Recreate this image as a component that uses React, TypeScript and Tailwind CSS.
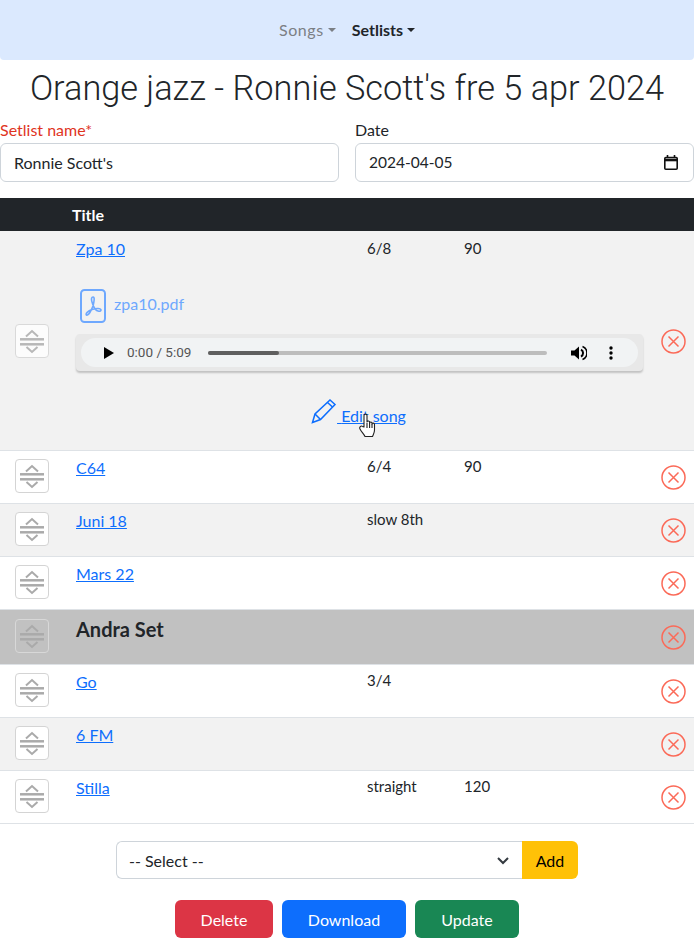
import React from 'react';

const BODY_FONT = 'font-["Lato",sans-serif]';

interface Song {
  title: string;
  sig?: string;
  tempo?: string;
  bold?: boolean;
}

const rows: Song[] = [
  { title: 'C64', sig: '6/4', tempo: '90' },
  { title: 'Juni 18', sig: 'slow 8th' },
  { title: 'Mars 22' },
  { title: 'Andra Set', bold: true },
  { title: 'Go', sig: '3/4' },
  { title: '6 FM' },
  { title: 'Stilla', sig: 'straight', tempo: '120' },
];

function DragHandle({ faded }: { faded?: boolean }) {
  return (
    <div
      className={`h-[34px] w-[34px] rounded border ${
        faded ? 'border-[#d8d8d8] bg-transparent' : 'border-[#d4d4d4] bg-white'
      }`}
    >
      <svg width="32" height="32" viewBox="1 1 32 32" fill="none" stroke="#aaaaaa" strokeWidth="2">
        <path d="M11 12.5 L17 7 L23 12.5" />
        <path d="M5 15.3 H29" strokeWidth="2.5" />
        <path d="M5 20.3 H29" strokeWidth="2.5" />
        <path d="M11.5 23 L17 28 L22.5 23" />
      </svg>
    </div>
  );
}

function RemoveIcon() {
  return (
    <svg width="25" height="25" viewBox="0 0 25 25" fill="none" stroke="#fb6a58" strokeWidth="1.5">
      <circle cx="12.5" cy="12.5" r="11.5" />
      <path d="M7.5 7.5 L17.5 17.5 M17.5 7.5 L7.5 17.5" />
    </svg>
  );
}

function AudioBar() {
  return (
    <div className="w-[567px] rounded-[4px] bg-[#e8e8e8] px-[5px] py-[4px] shadow-[0_2px_2px_rgba(0,0,0,0.2)]">
      <div className="flex h-[29px] items-center rounded-full bg-[#f1f3f4] font-['Roboto',sans-serif] text-[13.5px] text-[#555]">
        <svg width="12" height="12" viewBox="0 0 12 12" className="ml-[22px]">
          <path d="M1 0 L11 6 L1 12 Z" fill="#000" />
        </svg>
        <span className="ml-[12px] w-[66px] whitespace-nowrap">0:00 / 5:09</span>
        <div className="ml-[15px] h-[4px] w-[339px] rounded-full bg-[#bdbdbd]">
          <div className="h-[4px] w-[71px] rounded-full bg-[#5f5f5f]" />
        </div>
        <svg width="16" height="16" viewBox="0 0 16 16" className="ml-[24px]">
          <path d="M0 5.5 H3.5 L8 1.5 V14.5 L3.5 10.5 H0 Z" fill="#000" />
          <path d="M10 4.5 A4 4 0 0 1 10 11.5" fill="none" stroke="#000" strokeWidth="2" />
          <path d="M11.5 1.5 A7 7 0 0 1 11.5 14.5" fill="none" stroke="#000" strokeWidth="1.5" />
        </svg>
        <svg width="4" height="14" viewBox="0 0 4 14" className="ml-[22px]">
          <circle cx="2" cy="2" r="1.7" fill="#000" />
          <circle cx="2" cy="7" r="1.7" fill="#000" />
          <circle cx="2" cy="12" r="1.7" fill="#000" />
        </svg>
      </div>
    </div>
  );
}

function HandCursor() {
  return (
    <svg
      width="18"
      height="25"
      viewBox="0 0 18 25"
      className="absolute top-[9px] left-[22px]"
      fill="#fff"
      stroke="#222"
      strokeWidth="1.1"
      strokeLinejoin="round"
    >
      <path d="M5 14 V2.5 C5 0.6 8 0.6 8 2.5 V9 C8 7.6 10.6 7.6 10.6 9 V10 C10.6 8.7 13 8.7 13 10 V11 C13 9.8 15.5 9.8 15.5 11.2 V17 C15.5 20 14.5 21 13.5 23.5 H6 C5 21 2.5 19 1 16 C0 14 2 12.4 3.4 13.4 Z" />
      <path d="M8 10 V15 M10.6 10 V15 M13 11 V15" fill="none" />
    </svg>
  );
}

function SongRow({ song, index }: { song: Song; index: number }) {
  const bg = song.bold ? 'bg-[#c1c1c1]' : index % 2 === 1 ? 'bg-[#f2f2f2]' : 'bg-white';
  return (
    <div className={`flex border-b border-[#dee2e6] ${song.bold ? 'h-[55px]' : 'h-[53px]'} ${bg}`}>
      <div className="flex w-[65px] shrink-0 items-center pb-[2px] pl-[15px]">
        <DragHandle faded={song.bold} />
      </div>
      {song.bold ? (
        <div className="w-[291px] pt-[4px] pl-[11px] text-[20px] font-bold text-[#212529]">{song.title}</div>
      ) : (
        <a className="block h-fit w-[291px] pt-[5px] pl-[11px] text-[16px] text-[#0d6efd] underline">
          <span>{song.title}</span>
        </a>
      )}
      <div className="w-[97px] pt-[4px] pl-[11px] text-[15px] text-[#212529]">{song.sig}</div>
      <div className="w-[208px] pt-[4px] pl-[11px] text-[15px] text-[#212529]">{song.tempo}</div>
      <div className="flex items-center">
        <RemoveIcon />
      </div>
    </div>
  );
}

export default function App() {
  return (
    <div className={`h-[938px] w-[694px] overflow-hidden bg-white ${BODY_FONT} text-[#212529]`}>
      <nav className="flex h-[60px] items-center justify-center gap-[16px] rounded-b bg-[#dbe9fe] text-[16px]">
        <span className="flex items-center gap-[4px] tracking-[0.6px] text-[#7b7f84]">
          Songs
          <span className="h-0 w-0 border-x-[4px] border-t-[4px] border-x-transparent border-t-[#7b7f84]" />
        </span>
        <span className="flex items-center gap-[4px] font-bold text-[#212529]">
          Setlists
          <span className="h-0 w-0 border-x-[4px] border-t-[4px] border-x-transparent border-t-[#212529]" />
        </span>
      </nav>

      <h1 className="mt-[6px] h-[45px] text-center font-['Roboto',sans-serif] text-[34.3px] leading-[45px] font-light whitespace-nowrap">
        Orange jazz - Ronnie Scott's fre 5 apr 2024
      </h1>

      <form className="mt-[8px] grid grid-cols-2 gap-x-[16px]">
        <div>
          <label className="block h-[24px] text-[16px] leading-[22px] text-[#e0341e]">Setlist name*</label>
          <div className="flex h-[39px] items-center rounded-md border border-[#ced4da] px-[13px] text-[16px]">
            Ronnie Scott's
          </div>
        </div>
        <div>
          <label className="block h-[24px] text-[16px] leading-[22px]">Date</label>
          <div className="flex h-[39px] items-center justify-between rounded-md border border-[#ced4da] pr-[15px] pl-[13px] text-[15.5px]">
            2024-04-05
            <svg width="14" height="15" viewBox="0 0 14 15" fill="none" stroke="#111" strokeWidth="1.6">
              <rect x="0.8" y="2.5" width="12.4" height="11.7" rx="1" />
              <path d="M0.8 5 H13.2" strokeWidth="2.6" />
              <path d="M3.5 0 V3 M10.5 0 V3" />
            </svg>
          </div>
        </div>
      </form>

      <div className="mt-[16px] flex h-[33px] items-center bg-[#212529] pl-[72px] text-[16px] font-bold text-white">
        Title
      </div>

      <div className="flex h-[220px] border-b border-[#dee2e6] bg-[#f2f2f2]">
        <div className="flex w-[65px] shrink-0 items-center pl-[15px] opacity-80">
          <DragHandle />
        </div>
        <div className="w-[291px] pl-[11px]">
          <a className="mt-[6px] block text-[16px] text-[#0d6efd] underline">Zpa 10</a>
          <div>
            <div className="mt-[28px] flex w-[567px] items-center gap-[8px] pl-[4px]">
              <svg width="26" height="34" viewBox="0 0 26 34" fill="none" stroke="#6ea8fe" strokeWidth="2">
                <rect x="1" y="1" width="24" height="32" rx="3.5" />
                <path d="M13 8 C10 8 12 15 15 20 C17 22.5 21 23 21 21 C21 19 16 19 12 20.5 C8 22 5 25 6.5 26 C8.5 27 11 22 13 17 C14 13 15 8 13 8 Z" strokeWidth="1.6" />
              </svg>
              <span className="mb-[4px] text-[16px] text-[#6ea8fe]">zpa10.pdf</span>
            </div>
            <div className="mt-[11px]">
              <AudioBar />
            </div>
            <div className="mt-[27px] flex w-[567px] items-center justify-center pr-[2px] text-[16px] text-[#0d6efd]">
              <svg width="26" height="26" viewBox="0 0 26 26" fill="none" stroke="#0d6efd" strokeWidth="1.5" className="mb-[5px]">
                <path d="M1.5 24.5 L4 16 L19 2 L24 6.5 L9.5 21.5 Z" />
                <path d="M4 16 L9.5 21.5 M16.5 4.5 L21.5 9" />
              </svg>
              <a className="relative mt-[4px] underline">
                {'\u00a0'}Edit song
                <HandCursor />
              </a>
            </div>
          </div>
        </div>
        <div className="w-[97px] pt-[6px] pl-[11px] text-[15px]">6/8</div>
        <div className="w-[208px] pt-[6px] pl-[11px] text-[15px]">90</div>
        <div className="flex items-center pt-[1px]">
          <RemoveIcon />
        </div>
      </div>

      {rows.map((song, i) => (
        <SongRow key={song.title} song={song} index={i} />
      ))}

      <div className="mt-[17px] flex justify-center">
        <div className="flex h-[38px] w-[462px]">
          <div className="flex flex-1 items-center justify-between rounded-l-md border border-r-0 border-[#ced4da] pt-[1px] pr-[13px] pl-[12px] text-[16px]">
            -- Select --
            <svg width="12" height="8" viewBox="0 0 12 8" fill="none" stroke="#343a40" strokeWidth="2">
              <path d="M1 1 L6 6 L11 1" />
            </svg>
          </div>
          <button className="w-[56px] rounded-r-md bg-[#ffc107] pt-[1px] text-[16px] text-black">Add</button>
        </div>
      </div>

      <div className="mt-[21px] flex justify-center gap-[9px] text-[16px] text-white">
        <button className="h-[38px] w-[98px] rounded-md bg-[#dc3545] pt-[1px]">Delete</button>
        <button className="h-[38px] w-[124px] rounded-md bg-[#0d6efd] pt-[1px]">Download</button>
        <button className="h-[38px] w-[104px] rounded-md bg-[#198754] pt-[1px]">Update</button>
      </div>
    </div>
  );
}
